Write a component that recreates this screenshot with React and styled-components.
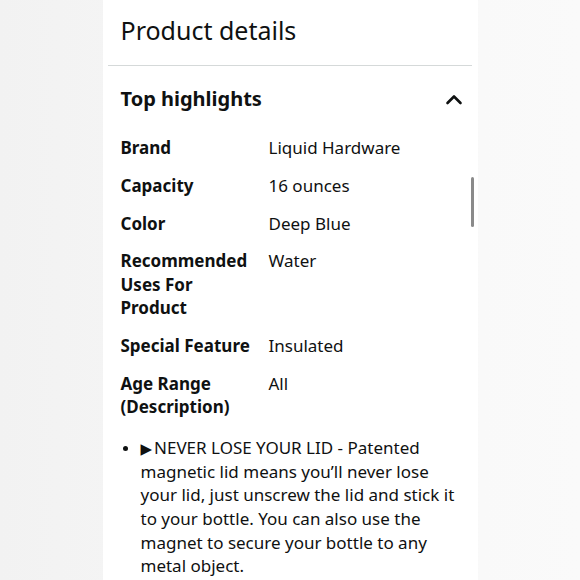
import React from 'react';
import styled, { createGlobalStyle } from 'styled-components';

const GlobalStyle = createGlobalStyle`
  html, body {
    margin: 0;
    padding: 0;
    background: #f5f5f5;
  }
  * {
    box-sizing: border-box;
  }
`;

const Page = styled.div`
  width: 580px;
  height: 580px;
  overflow: hidden;
  display: flex;
  justify-content: center;
  background: linear-gradient(90deg, #f2f2f2 0%, #f7f7f7 50%, #fafafa 100%);
  font-family: 'Noto Sans', 'Liberation Sans', sans-serif;
  color: #0f1111;
`;

const Panel = styled.section`
  position: relative;
  width: 375px;
  background: #ffffff;
  display: flex;
  flex-direction: column;
`;

const Title = styled.h2`
  margin: 0;
  padding: 12px 18px 17px;
  font-size: 25px;
  font-weight: 400;
  line-height: 36px;
`;

const Divider = styled.hr`
  margin: 0 6px 0 5px;
  border: none;
  border-top: 1.5px solid #d5d9d9;
`;

const Section = styled.div`
  padding: 0 18px;
`;

const SectionHeader = styled.div`
  display: flex;
  align-items: center;
  justify-content: space-between;
  padding: 19px 0 23px;
`;

const SectionTitle = styled.h3`
  margin: 0;
  font-size: 20px;
  font-weight: 700;
  line-height: 28px;
`;

const Chevron = styled.svg`
  width: 20px;
  height: 20px;
  margin-right: -4px;
`;

const SpecTable = styled.div`
  display: grid;
  grid-template-columns: 148px 1fr;
  row-gap: 14.5px;
  font-size: 17px;
  line-height: 23.3px;
`;

const SpecLabel = styled.div`
  font-weight: 700;
  padding-right: 16px;
`;

const SpecValue = styled.div`
  font-weight: 400;
`;

const Bullets = styled.ul`
  margin: 18px 0 0;
  padding: 0;
  list-style: none;
  font-size: 17px;
  line-height: 23.6px;
`;

const Bullet = styled.li`
  display: flex;
  gap: 13px;
`;

const Dot = styled.span`
  flex: none;
  width: 5px;
  height: 5px;
  margin: 10px 0 0 2px;
  border-radius: 50%;
  background: #0f1111;
`;

const BulletText = styled.span`
  flex: 1;
`;

const Arrow = styled.span`
  display: inline-block;
  font-family: 'DejaVu Sans', sans-serif;
  font-size: 15px;
  line-height: 15px;
  margin-right: 2px;
`;

const ScrollThumb = styled.div`
  position: absolute;
  top: 177px;
  right: 4px;
  width: 3px;
  height: 50px;
  border-radius: 2px;
  background: #8a8a8a;
`;

const specs = [
  ['Brand', 'Liquid Hardware'],
  ['Capacity', '16 ounces'],
  ['Color', 'Deep Blue'],
  ['Recommended Uses For Product', 'Water'],
  ['Special Feature', 'Insulated'],
  ['Age Range (Description)', 'All'],
];

const App = () => {
  return (
    <Page>
      <GlobalStyle />
      <Panel>
        <Title>Product details</Title>
        <Divider />
        <Section>
          <SectionHeader>
            <SectionTitle>Top highlights</SectionTitle>
            <Chevron viewBox="0 0 20 20" fill="none" stroke="#0f1111" strokeWidth="2.6" strokeLinecap="round" strokeLinejoin="round">
              <path d="M3.5 14 L10 7.5 L16.5 14" />
            </Chevron>
          </SectionHeader>
          <SpecTable>
            {specs.map(([label, value]) => (
              <React.Fragment key={label}>
                <SpecLabel>{label}</SpecLabel>
                <SpecValue>{value}</SpecValue>
              </React.Fragment>
            ))}
          </SpecTable>
          <Bullets>
            <Bullet>
              <Dot />
              <BulletText>
                <Arrow>▶</Arrow>NEVER LOSE YOUR LID - Patented magnetic lid means you’ll never lose your lid, just unscrew the lid and stick it to your bottle. You can also use the magnet to secure your bottle to any metal object.
              </BulletText>
            </Bullet>
          </Bullets>
        </Section>
        <ScrollThumb />
      </Panel>
    </Page>
  );
};

export default App;
